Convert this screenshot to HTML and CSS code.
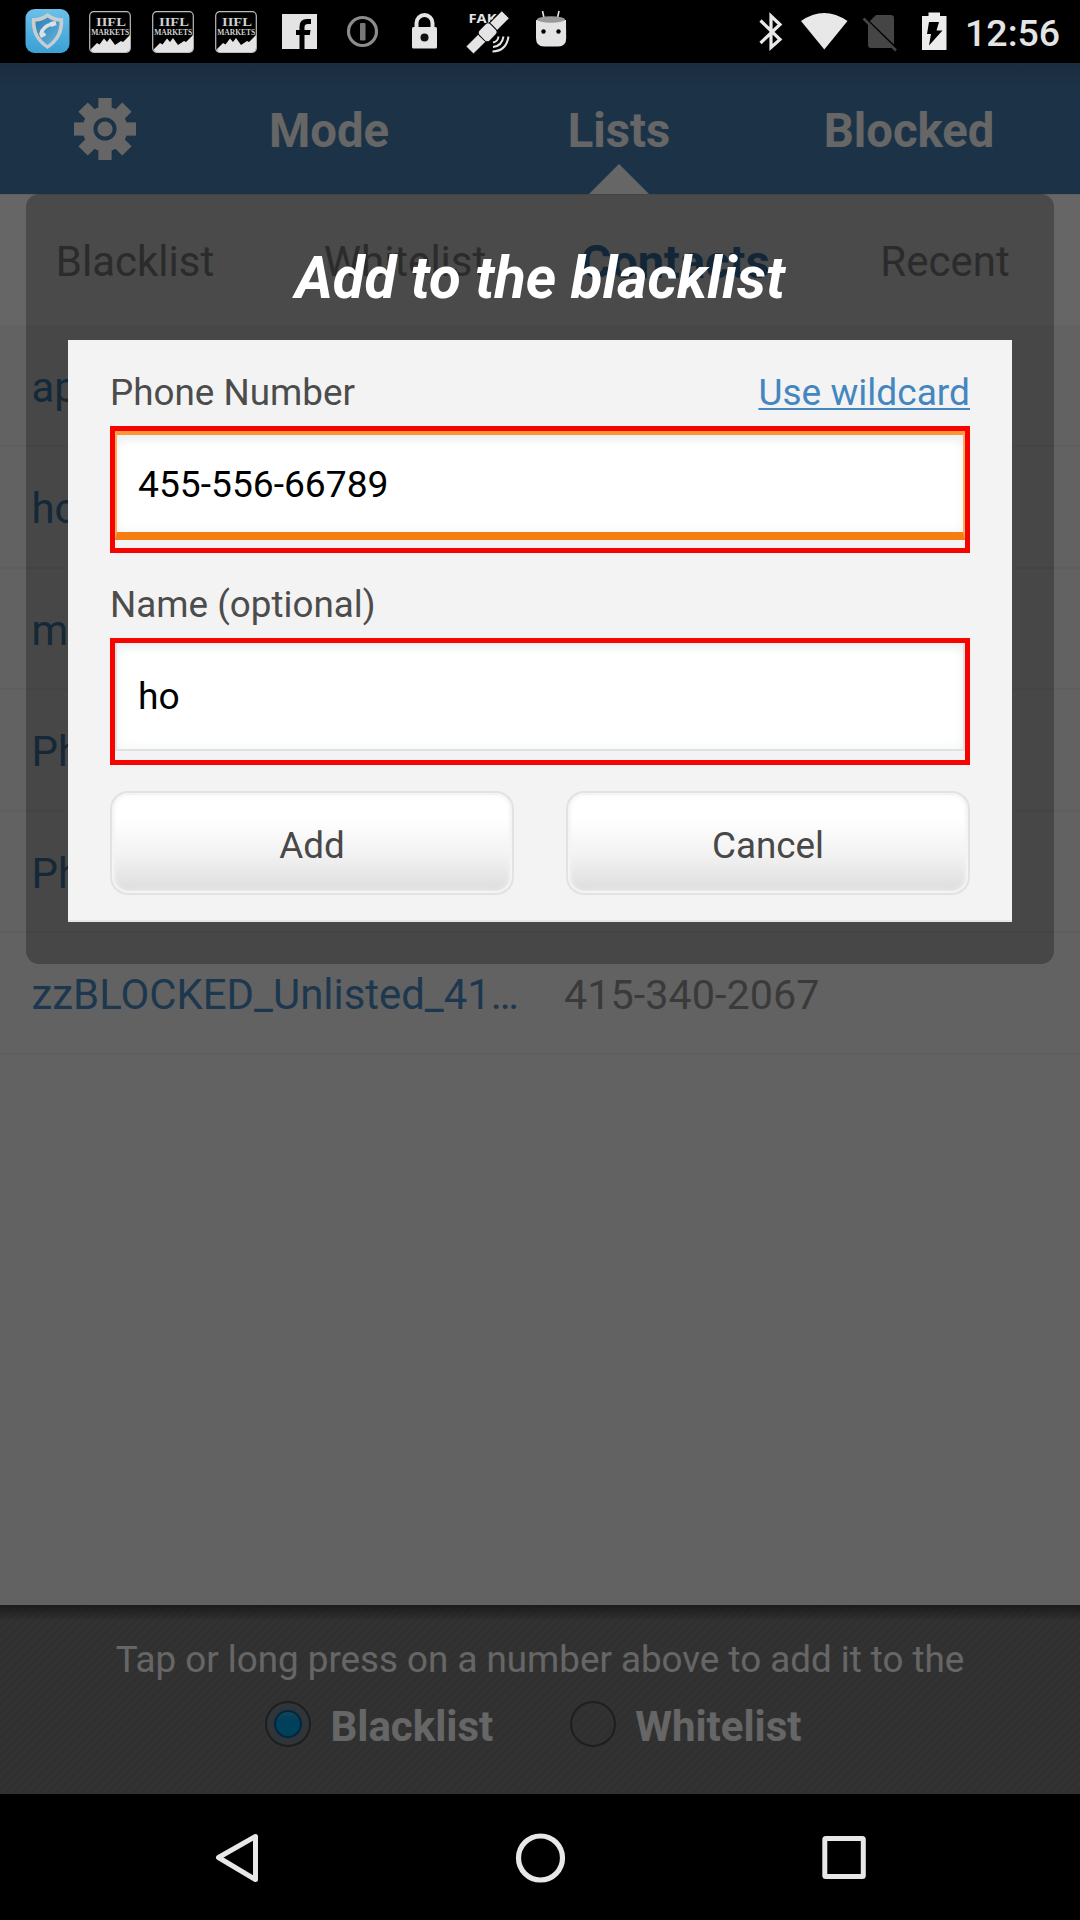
FILE: index.html
```html
<!DOCTYPE html>
<html lang="en">
<head>
<meta charset="utf-8">
<title>Call blocker</title>
<link rel="stylesheet" href="styles.css">
</head>
<body>
<div class="screen">
  <header class="status">
    <div class="status-left">
      <svg class="slot" viewBox="0 0 63 63">
        <defs>
          <linearGradient id="sky" x1="0" y1="0" x2="0" y2="1"><stop offset="0" stop-color="#6cc0e8"/><stop offset="1" stop-color="#3aa0d6"/></linearGradient>
          <linearGradient id="deep" x1="0" y1="0" x2="1" y2="1"><stop offset="0" stop-color="#2f80b4"/><stop offset="1" stop-color="#62b4de"/></linearGradient>
        </defs>
        <rect x="9.500" y="9" width="44" height="44" rx="9" fill="url(#sky)"/>
        <path d="M31.500 13 Q24 19 16 18 Q14 38 31.500 49 Q49 38 47 18 Q39 19 31.500 13Z" fill="#c9cdd0"/>
        <path d="M31.500 17.500 Q25 22 19.500 21.500 Q19 36 31.500 45 Q44 36 43.500 21.500 Q38 22 31.500 17.500Z" fill="url(#deep)"/>
        <path d="M25 34 Q26.500 26.500 36 24" fill="none" stroke="#dde1e4" stroke-width="3.500"/>
        <path d="M23 33.500l6-1 1 3-5 2.500z M34 22l5.500-1 1 4-5 2z" fill="#dde1e4"/>
      </svg>
      <svg class="slot" viewBox="0 0 63 63">
        <g id="iifl">
          <rect x="10.700" y="11.700" width="40.600" height="40.600" rx="4" fill="#000" stroke="#bdbdbd" stroke-width="1.200"/>
          <path d="M12 49 L18 43 L20.500 44.500 L25 38.500 L28 42 L31 38 L36 45 L42 41 L44 42 L51 35 V48 Q51 52 47 52 H14 Q12 52 12 49Z" fill="#e4e4e4"/>
          <text x="32" y="26" text-anchor="middle" class="iifl-top" textLength="30" lengthAdjust="spacingAndGlyphs">IIFL</text>
          <text x="31.200" y="35" text-anchor="middle" class="iifl-sub" textLength="38" lengthAdjust="spacingAndGlyphs">MARKETS</text>
        </g>
      </svg>
      <svg class="slot" viewBox="0 0 63 63"><use href="#iifl"/></svg>
      <svg class="slot" viewBox="0 0 63 63"><use href="#iifl"/></svg>
      <svg class="slot" viewBox="0 0 63 63">
        <path fill="#e4e4e4" d="M14 14h35v35H14z"/>
        <path fill="#000" d="M31.500 49V35H28v-5h3.500v-3.500q0-7.500 7.500-7.500h4v5h-3q-3.500 0-3.500 3V30h6l-.7 5h-5.300v14z"/>
      </svg>
      <svg class="slot" viewBox="0 0 63 63">
        <circle cx="31.500" cy="31.500" r="14" fill="none" stroke="#8c8c8c" stroke-width="3.200"/>
        <rect x="29" y="23" width="5.500" height="17.500" rx="1" fill="#777"/>
      </svg>
      <svg class="slot" viewBox="1 0 63 63">
        <path d="M23.500 28v-5a8 8 0 0 1 16 0v5" fill="none" stroke="#e4e4e4" stroke-width="4"/>
        <rect x="19" y="27" width="25" height="21.500" rx="1.500" fill="#e4e4e4"/>
        <circle cx="31.500" cy="37.500" r="4" fill="#111"/>
      </svg>
      <svg class="slot" viewBox="0 0 63 63">
        <text x="11.500" y="22.800" class="fake" textLength="28" lengthAdjust="spacingAndGlyphs">FAK</text>
        <g transform="translate(31 32) rotate(-45)" fill="#e4e4e4" stroke="#000" stroke-width="1">
          <rect x="-26" y="-5.500" width="18" height="11"/>
          <rect x="7" y="-5.500" width="18" height="11"/>
          <rect x="-8.500" y="-7.500" width="16" height="15" rx="4"/>
        </g>
        <path d="M36 42.500q5-1 5.500-6 M36 47q9-1 10.500-10.500 M35.500 51.500q14-.5 16-15" fill="none" stroke="#e4e4e4" stroke-width="2"/>
      </svg>
      <svg class="slot" viewBox="0 0 63 63">
        <path d="M22.500 11l2 9 M39 11l-2 9" stroke="#e4e4e4" stroke-width="1.600"/>
        <path d="M16 20h30l.2 18q0 8.500-8 8.500H24q-8 0-8-8.500z" fill="#e4e4e4"/>
        <ellipse cx="31" cy="19.500" rx="14" ry="3.200" fill="#999"/>
        <circle cx="23.500" cy="31.500" r="2.200" fill="#000"/><circle cx="38.500" cy="31.500" r="2.200" fill="#000"/>
      </svg>
    </div>
    <div class="status-right">
      <svg width="44" height="63" viewBox="750 0 44 63"><path d="M760.500 20.500L780 39.500l-9 8V16l9 8.500-19.500 18.500" fill="none" stroke="#e8e8e8" stroke-width="3.200"/></svg>
      <svg width="60" height="63" viewBox="794 0 60 63"><path d="M801 21Q824 5 847.500 21L824.300 49.500z" fill="#e8e8e8"/></svg>
      <svg width="54" height="63" viewBox="854 0 54 63"><path d="M876 15h15q3 0 3 3v30H871q-3 0-3-3V23z" fill="#454545"/><path d="M864 17.500l33 32" stroke="#000" stroke-width="3"/><path d="M864.500 17l32.500 32" stroke="#454545" stroke-width="2.500" transform="translate(-1 1.500)"/></svg>
      <svg width="57" height="63" viewBox="908 0 57 63"><path d="M922 16h6.500v-3.500h11.500V16h6.500v34H922z" fill="#ececec"/><path d="M929 22h10l-2.500 8.500h6L929 45.500l2-11.500h-4z" fill="#000"/></svg>
      <span class="clock">12:56</span>
    </div>
  </header>

  <main class="app">
    <nav class="topnav">
      <div class="gear">
        <svg width="64" height="64" viewBox="-32 -32 64 64">
          <g fill="#fff">
            <circle r="22.500"/>
            <rect x="-6.600" y="-31" width="13.200" height="62"/>
            <rect x="-6.600" y="-31" width="13.200" height="62" transform="rotate(90)"/>
            <rect x="-6.600" y="-31" width="13.200" height="62" transform="rotate(45)"/>
            <rect x="-6.600" y="-31" width="13.200" height="62" transform="rotate(-45)"/>
          </g>
          <circle r="9.600" fill="none" stroke="#4880b2" stroke-width="4"/>
        </svg>
      </div>
      <div class="navitem">Mode</div>
      <div class="navitem active">Lists</div>
      <div class="navitem">Blocked</div>
    </nav>
    <div class="tabs">
      <div class="tab">Blacklist</div>
      <div class="tab">Whitelist</div>
      <div class="tab selected">Contacts</div>
      <div class="tab">Recent</div>
    </div>
    <div class="list">
      <div class="row"><span class="name">ap</span></div>
      <div class="row"><span class="name">ho</span></div>
      <div class="row"><span class="name">m</span></div>
      <div class="row"><span class="name">Ph</span></div>
      <div class="row"><span class="name">Ph</span></div>
      <div class="row"><span class="name">zzBLOCKED_Unlisted_41…</span><span class="number">415-340-2067</span></div>
    </div>
    <div class="footer">
      <p class="hint">Tap or long press on a number above to add it to the</p>
      <div class="radios">
        <div class="radio"><span class="dot on"></span><span class="radio-label">Blacklist</span></div>
        <div class="radio"><span class="dot"></span><span class="radio-label">Whitelist</span></div>
      </div>
    </div>
    <div class="scrim">
      <section class="dialog">
        <h1 class="title">Add to the blacklist</h1>
        <div class="form">
          <div class="labels"><span>Phone Number</span><a class="wild">Use wildcard</a></div>
          <div class="mark"><div class="field focus">455-556-66789</div></div>
          <div class="labels second"><span>Name (optional)</span></div>
          <div class="mark"><div class="field">ho</div></div>
          <div class="buttons"><div class="btn">Add</div><div class="btn">Cancel</div></div>
        </div>
      </section>
    </div>
  </main>

  <footer class="sysnav">
    <svg width="48" height="56" viewBox="213 1830 48 56"><path d="M255.500 1836.500v43L218.500 1857.500z" fill="none" stroke="#e8e8e8" stroke-width="5" stroke-linejoin="round"/></svg>
    <svg width="56" height="56" viewBox="-27.500 -28 56 56"><circle r="22" fill="none" stroke="#e8e8e8" stroke-width="5.200"/></svg>
    <svg width="48" height="56" viewBox="820 1830 48 56"><rect x="824.800" y="1838.500" width="38.500" height="38" rx="1" fill="none" stroke="#e8e8e8" stroke-width="5" stroke-linejoin="round"/></svg>
  </footer>
</div>
</body>
</html>
```
FILE: styles.css
```css
* { box-sizing: border-box; }
body { margin: 0; background: #000; font-family: Roboto, "Liberation Sans", sans-serif; }
.screen { width: 1080px; height: 1920px; display: flex; flex-direction: column; overflow: hidden; }
svg { display: block; flex: none; }

.status { height: 63px; flex: none; display: flex; justify-content: space-between; background: #000; }
.status-left { display: flex; padding-left: 16px; }
.slot { width: 63px; height: 63px; }
.status-right { display: flex; width: 330px; }
.clock { color: #e4e4e4; font-size: 37.500px; font-weight: 500; line-height: 67px; white-space: nowrap; }
.iifl-top { font: bold 13.500px "Liberation Serif", serif; fill: #d0d0d0; }
.iifl-sub { font: bold 8px "Liberation Serif", serif; fill: #d0d0d0; }
.fake { font: bold 13px "Open Sans", sans-serif; fill: #e4e4e4; }

.app { position: relative; height: 1731px; flex: none; display: flex; flex-direction: column; background: #f5f5f5; }
.topnav { height: 131px; flex: none; display: flex; padding: 0 26px; background: linear-gradient(#456f9f, #4880b2 30px); color: #fff; }
.gear { width: 158px; display: flex; justify-content: center; align-items: center; }
.navitem { width: 290px; text-align: center; font-size: 47.200px; font-weight: 700; line-height: 136px; }
.active { position: relative; }
.active::after { content: ""; position: absolute; left: 115px; bottom: 0; width: 60px; height: 30px; background: #fff; clip-path: polygon(50% 0, 100% 100%, 0 100%); }

.tabs { height: 131px; flex: none; display: flex; background: #fff; color: #969696; font-size: 42px; line-height: 134px; border-top: 1px solid #f5e9e0; }
.tab { width: 270px; text-align: center; }
.selected { font-size: 47px; font-weight: 700; line-height: 133px; color: #4086c0; }

.list { flex: 1; padding-top: 0.500px; }
.row { height: 121.500px; display: flex; border-bottom: 2px solid #ebebeb; padding-left: 31.500px; font-size: 41.900px; line-height: 124px; white-space: nowrap; }
.name { width: 532.500px; color: #4a8cc4; }
.number { color: #929292; font-size: 41.400px; }

.footer { height: 189px; flex: none; display: flex; flex-direction: column; align-items: center; padding-top: 34px; color: #fff;
  background:
    linear-gradient(rgba(0,0,0,.45), rgba(0,0,0,0) 16px),
    repeating-linear-gradient(135deg, rgba(255,255,255,.02) 0 3px, rgba(0,0,0,.02) 3px 6px),
    #7b7b7b; }
.hint { margin: 0; font-size: 36.750px; line-height: 42px; white-space: nowrap; }
.radios { display: flex; gap: 77px; margin: 20px 13px 0 0; }
.radio { display: flex; align-items: center; height: 46px; }
.dot { width: 46px; height: 46px; border: 2px solid #4b4b4b; border-radius: 50%; margin-right: 19px; display: flex; align-items: center; justify-content: center; }
.on { background: #76848f; }
.on::after { content: ""; width: 28px; height: 28px; border-radius: 50%; background: linear-gradient(#30b0e0, #00a0e0 35%); border: 2px solid #0a5f98; box-sizing: border-box; }
.radio-label { font-size: 42px; font-weight: 700; padding-top: 5px; }

.scrim { position: absolute; inset: 0; background: rgba(0,0,0,.6); padding: 131px 26px 0; }
.dialog { height: 770px; border-radius: 13px; background: rgba(0,0,0,.275); padding: 48px 42px 0; }
.title { margin: 0; height: 98px; font-size: 58.200px; line-height: 73px; font-weight: 700; font-style: italic; text-align: center; color: #fff; white-space: nowrap; }
.form { height: 582px; background: #f3f3f3; padding: 30px 42px 0; border-bottom: 2px solid #e6e6e6; }
.labels { display: flex; justify-content: space-between; height: 56px; font-size: 36.800px; line-height: 46px; color: #4c4c4c; white-space: nowrap; }
.second { margin-top: 29px; }
.wild { font-size: 37.100px; color: #4486bf; text-decoration: underline; text-decoration-thickness: 2px; text-underline-offset: 3px; text-decoration-skip-ink: none; }
.mark { height: 127px; border: 5px solid #f50400; }
.field { height: 108px; padding: 0 21px; border: solid #dfe1e2; border-width: 0 2px 2px; background: #fff; box-shadow: inset 0 10px 10px -5px #edf0f2, inset 0 0 12px #f0f2f3; color: #000; font-size: 37.200px; line-height: 106px; }
.focus { height: 109px; border: solid #f67c10; border-width: 4px 2px 8px; border-color: #fc9636 #fdae5c #f47c10; line-height: 98px; }
.buttons { display: flex; justify-content: space-between; margin-top: 26px; }
.btn { width: 404px; height: 104px; border: 2px solid #e2e2e2; border-radius: 18px; text-align: center; font-size: 36.800px; line-height: 105px; color: #484848; background: linear-gradient(#fff 25%, #f3f3f3 60%, #dcdcdc); box-shadow: inset 0 0 0 2px #f4f4f4, inset 0 0 5px 2px #f4f4f4; }

.sysnav { height: 126px; flex: none; display: flex; justify-content: space-between; padding: 36px 212px 0 213px; background: #000; }
```
